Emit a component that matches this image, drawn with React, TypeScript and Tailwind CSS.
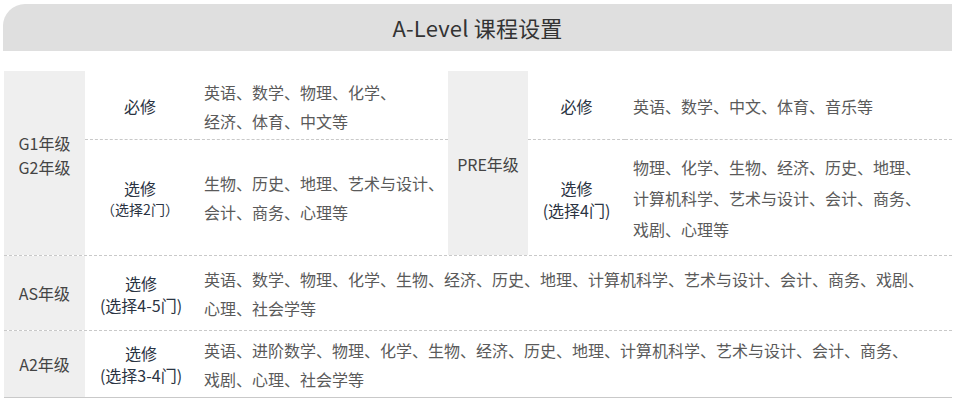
import React from "react";

const font = { fontFamily: '"Noto Sans CJK SC", "Noto Sans", sans-serif' };

function Label({ top, bottom, small }: { top: string; bottom?: string; small?: boolean }) {
  return (
    <div className="flex flex-col items-center justify-center text-center text-[#2a3342] leading-[22px]">
      <div className="text-[16px]">{top}</div>
      {bottom && <div className={small ? "text-[14px] leading-[20px]" : "text-[16px] leading-[22px]"}>{bottom}</div>}
    </div>
  );
}

function Content({ lines, lh = "leading-[29px]" }: { lines: string[]; lh?: string }) {
  return (
    <div className={`text-[16px] text-[#5a5a5a] whitespace-nowrap ${lh}`}>
      {lines.map((l, i) => (
        <div key={i}>{l}</div>
      ))}
    </div>
  );
}

export default function App() {
  return (
    <div className="w-[959px] h-[401px] bg-white overflow-hidden" style={font}>
      <div className="ml-[3px] mt-[4px] w-[949px] h-[47px] rounded-tl-[22px] bg-[#dfdfdf] flex items-center justify-center">
        <span className="text-[22px] text-[#333] tracking-[0.2px]">A-Level 课程设置</span>
      </div>

      <div className="ml-[4px] mt-[20px] w-[948px]">
        <div className="grid grid-cols-[81px_112px_251px_80px_97px_327px] grid-rows-[69px_115px] border-b border-dashed border-[#c9c9c9]">
          <div className="row-span-2 bg-[#efefef] flex items-center justify-center pb-[16px]">
            <div className="text-[16px] text-[#444] leading-[24px] text-center">
              <div>G1年级</div>
              <div>G2年级</div>
            </div>
          </div>
          <div className="border-b border-dashed border-[#c9c9c9] flex items-center justify-center pt-[2px] pr-[2px]">
            <Label top="必修" />
          </div>
          <div className="border-b border-dashed border-[#c9c9c9] flex items-center pl-[7px] pt-[4px]">
            <Content lines={["英语、数学、物理、化学、", "经济、体育、中文等"]} />
          </div>
          <div className="row-span-2 bg-[#efefef] flex items-center justify-center pt-[2px]">
            <div className="text-[16px] text-[#444]">PRE年级</div>
          </div>
          <div className="border-b border-dashed border-[#c9c9c9] flex items-center justify-center pt-[2px]">
            <Label top="必修" />
          </div>
          <div className="border-b border-dashed border-[#c9c9c9] flex items-center pl-[8px] pt-[2px]">
            <Content lines={["英语、数学、中文、体育、音乐等"]} />
          </div>

          <div className="flex items-center justify-center pr-[2px]">
            <Label top="选修" bottom="（选择2门）" small />
          </div>
          <div className="flex items-center pl-[7px]">
            <Content lines={["生物、历史、地理、艺术与设计、", "会计、商务、心理等"]} />
          </div>
          <div className="flex items-center justify-center pt-[2px]">
            <Label top="选修" bottom="(选择4门)" />
          </div>
          <div className="flex items-center pl-[8px] pt-[2px]">
            <Content lines={["物理、化学、生物、经济、历史、地理、", "计算机科学、艺术与设计、会计、商务、", "戏剧、心理等"]} lh="leading-[31px]" />
          </div>
        </div>

        <div className="flex h-[75px] border-b border-dashed border-[#c9c9c9]">
          <div className="w-[81px] bg-[#efefef] flex items-center justify-center">
            <div className="text-[16px] text-[#444]">AS年级</div>
          </div>
          <div className="w-[112px] flex items-center justify-center pt-[2px]">
            <Label top="选修" bottom="(选择4-5门)" />
          </div>
          <div className="flex-1 flex items-center pl-[7px] pt-[2px]">
            <Content lines={["英语、数学、物理、化学、生物、经济、历史、地理、计算机科学、艺术与设计、会计、商务、戏剧、", "心理、社会学等"]} />
          </div>
        </div>

        <div className="flex h-[67px] border-b border-[#c9c9c9]">
          <div className="w-[81px] bg-[#efefef] flex items-center justify-center">
            <div className="text-[16px] text-[#444]">A2年级</div>
          </div>
          <div className="w-[112px] flex items-center justify-center">
            <Label top="选修" bottom="(选择3-4门)" />
          </div>
          <div className="flex-1 flex items-center pl-[7px] pt-[2px]">
            <Content lines={["英语、进阶数学、物理、化学、生物、经济、历史、地理、计算机科学、艺术与设计、会计、商务、", "戏剧、心理、社会学等"]} />
          </div>
        </div>
      </div>
    </div>
  );
}
